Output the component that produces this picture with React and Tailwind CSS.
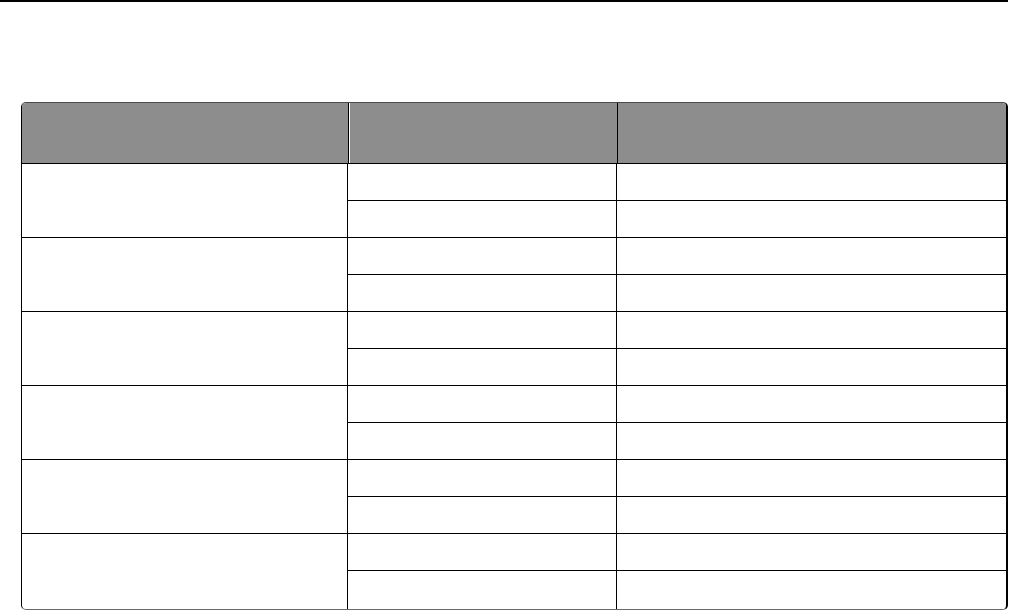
export default function App() {
  const groups = [0, 1, 2, 3, 4, 5];
  return (
    <div className="w-[1009px] h-[611px] bg-white relative overflow-hidden">
      <div className="h-[2px] w-[1008px] bg-black" />
      <div className="ml-[21px] mt-[100px] w-[987px] rounded-[5px] overflow-hidden border-t border-t-[#4a4a4a] border-l border-l-black border-r-2 border-r-black border-b border-b-[#6a6a6a]">
        <div className="h-[61px] bg-[#8d8d8d] border-b border-black flex">
          <div className="w-[326px]" />
          <div className="w-px bg-black" />
          <div className="w-px bg-white" />
          <div className="w-[267px]" />
          <div className="w-px bg-black" />
          <div className="flex-1" />
        </div>
        {groups.map((g) => (
          <div
            key={g}
            className={
              g === 0
                ? "h-[74px] flex border-b border-black"
                : g < 5
                ? "h-[74px] flex border-b border-black"
                : "h-[75px] flex"
            }
          >
            <div className="w-[326px] border-r border-black" />
            <div className="flex-1 flex flex-col">
              <div className="h-[37px] flex border-b border-black">
                <div className="w-[269px] border-r border-black" />
                <div className="flex-1" />
              </div>
              <div className="flex-1 flex">
                <div className="w-[269px] border-r border-black" />
                <div className="flex-1" />
              </div>
            </div>
          </div>
        ))}
      </div>
    </div>
  );
}
